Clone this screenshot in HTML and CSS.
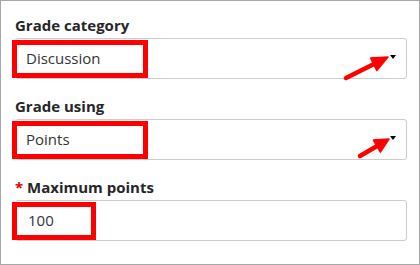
FILE: index.html
```html
<!DOCTYPE html>
<html lang="en">
<head>
    <meta charset="UTF-8">
    <meta name="viewport" content="width=device-width, initial-scale=1.0">
    <title>Grade settings</title>
    <link rel="stylesheet" href="styles.css">
</head>
<body>
    <div class="panel">
        <div class="field">
            <label class="field-label">Grade category</label>
            <div class="box select">
                <span class="value">Discussion</span>
                <span class="caret"></span>
                <span class="mark mark-wide"></span>
                <svg class="pointer" width="392" height="41">
                    <line x1="330" y1="39" x2="359" y2="24.5" />
                    <polygon points="372,18 360.8,31.5 354.6,18.9" />
                </svg>
            </div>
        </div>
        <div class="field">
            <label class="field-label">Grade using</label>
            <div class="box select">
                <span class="value">Points</span>
                <span class="caret"></span>
                <span class="mark mark-wide"></span>
                <svg class="pointer" width="392" height="41">
                    <line x1="344" y1="36" x2="362" y2="25.5" />
                    <polygon points="373,19 364.4,32.1 357.4,20.1" />
                </svg>
            </div>
        </div>
        <div class="field">
            <label class="field-label"><span class="required">*</span> Maximum points</label>
            <div class="box input">
                <span class="value">100</span>
                <span class="mark mark-small"></span>
            </div>
        </div>
    </div>
</body>
</html>
```

FILE: styles.css
```css
body {
    margin: 0;
    font-family: 'Open Sans', 'Noto Sans', sans-serif;
    color: #333333;
}

/* Outer panel */
.panel {
    width: 420px;
    height: 265px;
    box-sizing: border-box;
    border: 1px solid #a8a8a8;
    padding: 14px 12px 0 14px;
    background-color: #FFFFFF;
}

.field {
    display: flex;
    flex-direction: column;
    margin-bottom: 17px;
}

.field-label {
    font-size: 15px;
    font-weight: 700;
    line-height: 20px;
    margin-bottom: 3px;
    color: #262626;
}

.required {
    color: #e00000;
}

.box {
    position: relative;
    height: 41px;
    box-sizing: border-box;
    border: 1px solid #cccccc;
    border-radius: 3px;
    display: flex;
    align-items: center;
    justify-content: space-between;
    padding: 0 10px 2px 10px;
    font-size: 15px;
}

.input {
    padding-left: 12px;
}

.input .value {
    color: #2b3440;
}

.caret {
    width: 0;
    height: 0;
    border-left: 3px solid transparent;
    border-right: 3px solid transparent;
    border-top: 4px solid #000000;
    margin-bottom: 2px;
}

/* Red annotation boxes */
.mark {
    position: absolute;
    top: 1px;
    left: -4px;
    height: 38px;
    box-sizing: border-box;
    border: 5px solid #ff0000;
}

.mark-wide {
    width: 136px;
}

.mark-small {
    width: 84px;
}

.pointer {
    position: absolute;
    top: 0;
    left: 0;
    overflow: visible;
}

.pointer line {
    stroke: #ff0000;
    stroke-width: 4.5;
    stroke-linecap: round;
}

.pointer polygon {
    fill: #ff0000;
    stroke: #ff0000;
    stroke-width: 1.5;
    stroke-linejoin: round;
}
```
